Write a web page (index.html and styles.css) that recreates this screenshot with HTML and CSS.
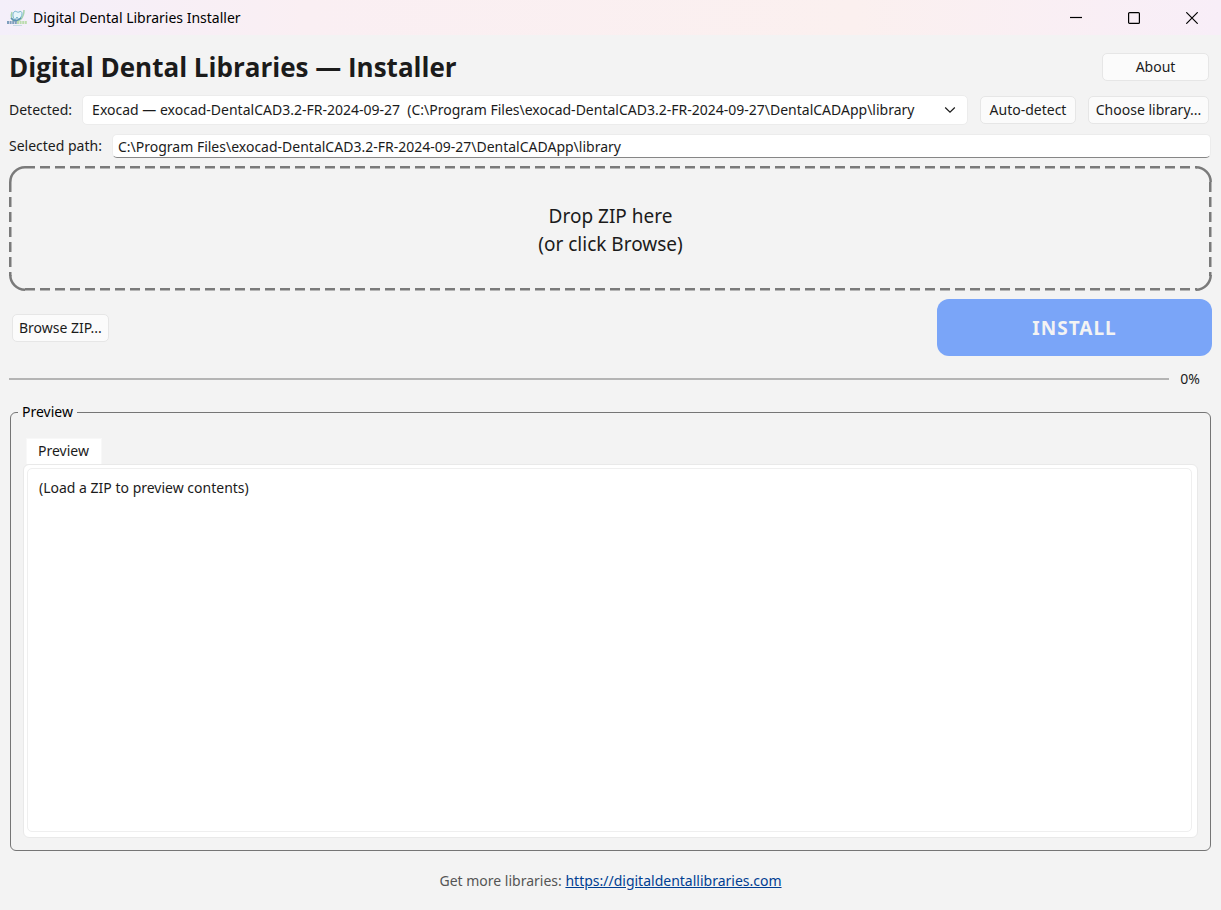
FILE: index.html
```html
<!DOCTYPE html>
<html lang="en">
<head>
  <meta charset="UTF-8" />
  <meta name="viewport" content="width=device-width, initial-scale=1" />
  <title>Digital Dental Libraries Installer</title>
  <link rel="stylesheet" href="styles.css">
</head>
<body>
  <header class="titlebar">
    <svg class="app-icon" width="20" height="18" viewBox="0 0 20 18" aria-hidden="true">
      <path d="M5 3 C3 8 5 12 8 12 C12 13 17 9 17 1" fill="none" stroke="#a5d3ae" stroke-width="1.5" />
      <path d="M7 3 C9 1 10 4 12 3 C15 1 16 5 14 8 L12 11 L10 8 L8 11 C6 9 5 5 7 3Z" fill="#e7f5fa" stroke="#6fb2cb" stroke-width="1" />
      <path d="M4 9 Q8 14 14 9" fill="none" stroke="#5b90b3" stroke-width="1.5" />
      <path d="M0 13.5H10" stroke="#7f9fbd" stroke-width="3" stroke-dasharray="2 .6" />
      <path d="M10 13.5H20" stroke="#bcdcae" stroke-width="3" stroke-dasharray="2 .6" />
      <path d="M6 16.5H15" stroke="#c9dde4" stroke-width="1" />
    </svg>
    <span class="window-title">Digital Dental Libraries Installer</span>
    <div class="window-controls">
      <button type="button" aria-label="Minimize">
        <svg width="12" height="12" viewBox="0 0 12 12"><path d="M0 5.5H12" /></svg>
      </button>
      <button type="button" aria-label="Maximize">
        <svg width="12" height="12" viewBox="0 0 12 12"><rect x=".6" y=".6" width="10.8" height="10.8" rx="1" /></svg>
      </button>
      <button type="button" aria-label="Close">
        <svg width="12" height="12" viewBox="0 0 12 12"><path d="M.3 .3L11.7 11.7M11.7 .3L.3 11.7" /></svg>
      </button>
    </div>
  </header>

  <main class="content">
    <div class="heading-row">
      <h1>Digital Dental Libraries — Installer</h1>
      <button type="button" class="btn btn-about">About</button>
    </div>

    <div class="detected-row">
      <label for="detected">Detected:</label>
      <div class="select-wrap">
        <select id="detected">
          <option>Exocad — exocad-DentalCAD3.2-FR-2024-09-27 &nbsp;(C:\Program Files\exocad-DentalCAD3.2-FR-2024-09-27\DentalCADApp\library</option>
        </select>
        <svg class="chevron" width="12" height="8" viewBox="0 0 12 8"><path d="M1.2 1.5L6 6.2L10.8 1.5" /></svg>
      </div>
      <button type="button" class="btn btn-detect">Auto-detect</button>
      <button type="button" class="btn btn-library">Choose library...</button>
    </div>

    <div class="path-row">
      <label for="path">Selected path:</label>
      <input type="text" id="path" value="C:\Program Files\exocad-DentalCAD3.2-FR-2024-09-27\DentalCADApp\library" readonly>
    </div>

    <div class="drop-zone">
      <!-- dashed sides, solid corners -->
      <svg class="drop-border" aria-hidden="true">
        <defs>
          <pattern id="dash-x" x="16" width="15" height="4000" patternUnits="userSpaceOnUse"><rect width="10" height="4000" fill="#7a7a7a" /></pattern>
          <pattern id="dash-y" y="16" width="4000" height="15" patternUnits="userSpaceOnUse"><rect width="4000" height="10" fill="#7a7a7a" /></pattern>
        </defs>
        <rect class="side-top" height="2.5" fill="url(#dash-x)" />
        <rect class="side-bottom" height="2.5" fill="url(#dash-x)" />
        <rect class="side-left" width="2.5" fill="url(#dash-y)" />
        <rect class="side-right" width="2.5" fill="url(#dash-y)" />
        <svg class="corner"><path d="M1.3 16A14.7 14.7 0 0 1 16 1.3" /></svg>
        <svg class="corner" x="100%"><path d="M-16 1.3A14.7 14.7 0 0 1 -1.3 16" /></svg>
        <svg class="corner" y="100%"><path d="M1.3 -16A14.7 14.7 0 0 0 16 -1.3" /></svg>
        <svg class="corner" x="100%" y="100%"><path d="M-16 -1.3A14.7 14.7 0 0 0 -1.3 -16" /></svg>
      </svg>
      <p>Drop ZIP here<br>(or click Browse)</p>
    </div>

    <div class="action-row">
      <button type="button" class="btn">Browse ZIP...</button>
      <button type="button" class="btn-install" disabled>INSTALL</button>
    </div>

    <div class="progress-row">
      <progress id="progress" value="0" max="100"></progress>
      <label for="progress">0%</label>
    </div>

    <fieldset class="preview-group">
      <legend>Preview</legend>
      <div class="tabs" role="tablist">
        <button type="button" class="tab" role="tab" aria-selected="true">Preview</button>
      </div>
      <div class="tab-panel" role="tabpanel">
        <div class="preview-text">(Load a ZIP to preview contents)</div>
      </div>
    </fieldset>
  </main>

  <footer class="footer">
    Get more libraries: <a href="https://digitaldentallibraries.com">https://digitaldentallibraries.com</a>
  </footer>
</body>
</html>
```
FILE: styles.css
```css
* {
  box-sizing: border-box;
}

body {
  margin: 0;
  height: 100vh;
  display: flex;
  flex-direction: column;
  background: #f3f3f3;
  color: #1b1b1b;
  font-family: "Noto Sans", "Open Sans", sans-serif;
  font-size: 14px;
  line-height: 20px;
}

button,
select,
input {
  font: inherit;
  color: inherit;
}

/* title bar */
.titlebar {
  display: flex;
  flex-shrink: 0;
  align-items: center;
  height: 35px;
  padding-left: 7px;
  background: linear-gradient(90deg, #f4effa 0%, #faeff3 25%, #fbf0ef 70%, #f8eef8 100%);
  color: #000;
}

.window-title {
  margin-left: 6px;
}

.window-controls {
  display: flex;
  margin-left: auto;
}

.window-controls button {
  display: flex;
  align-items: center;
  justify-content: center;
  width: 58px;
  height: 34px;
  padding: 0;
  border: 0;
  background: none;
}

.window-controls svg {
  fill: none;
  stroke: #000;
  stroke-width: 1.2;
}

.content {
  flex: 1;
  display: flex;
  flex-direction: column;
  padding: 0 9px;
}

.btn {
  height: 28px;
  padding: 0 6px;
  border: 1px solid #e6e6e6;
  border-radius: 5px;
  background: #fbfbfb;
  white-space: nowrap;
}

/* heading */
.heading-row {
  display: flex;
  align-items: center;
  justify-content: space-between;
  height: 58px;
  padding: 5px 3px 0 0;
}

h1 {
  margin: 0;
  font-family: "Open Sans", "Noto Sans", sans-serif;
  font-size: 26px;
  line-height: 36px;
}

.btn-about {
  width: 107px;
}

.btn-detect {
  width: 96px;
}

.btn-library {
  width: 121px;
}

/* library selection */
.detected-row {
  display: flex;
  align-items: center;
  gap: 12px;
  height: 33px;
  padding-right: 3px;
}

.select-wrap {
  position: relative;
  flex: 1;
  min-width: 0;
  margin-left: -2px;
}

select {
  display: block;
  width: 100%;
  height: 30px;
  padding: 0 28px 0 9px;
  border: 1px solid #ececec;
  border-radius: 5px;
  background: #fff;
  appearance: none;
  text-overflow: clip;
}

.chevron {
  position: absolute;
  top: 11px;
  right: 12px;
  fill: none;
  stroke: #1b1b1b;
  stroke-width: 1.2;
  pointer-events: none;
}

.path-row {
  display: flex;
  align-items: center;
  gap: 10px;
  height: 40px;
  padding-right: 1px;
}

.path-row input {
  flex: 1;
  min-width: 0;
  height: 24px;
  padding: 0 5px;
  border: 1px solid #ececec;
  border-bottom-color: #868686;
  border-radius: 5px;
  background: #fff;
}

/* drop area */
.drop-zone {
  position: relative;
  display: flex;
  flex-shrink: 0;
  align-items: center;
  justify-content: center;
  height: 125px;
  padding-top: 2px;
  text-align: center;
}

.drop-border {
  position: absolute;
  inset: 0;
  width: 100%;
  height: 100%;
}

.corner {
  overflow: visible;
  fill: none;
  stroke: #7a7a7a;
  stroke-width: 2.5;
}

.side-top,
.side-bottom {
  x: 16px;
  width: calc(100% - 31px);
}

.side-bottom {
  y: calc(100% - 3px);
}

.side-left,
.side-right {
  y: 16px;
  height: calc(100% - 31px);
}

.side-right {
  x: calc(100% - 3px);
}

.drop-zone p {
  margin: 0;
  font-size: 19px;
  line-height: 28px;
}

.action-row {
  display: flex;
  align-items: center;
  justify-content: space-between;
  padding: 8px 0 0 3px;
}

.btn-install {
  width: 275px;
  height: 57px;
  border: 0;
  border-radius: 12px;
  background: #7aa5f8;
  color: #f3f3f3;
  font-size: 19px;
  font-weight: 700;
  letter-spacing: 1px;
}

/* progress */
.progress-row {
  display: flex;
  align-items: center;
  gap: 11px;
  height: 46px;
  padding-right: 12px;
}

progress {
  flex: 1;
  height: 2px;
  border: 0;
  background: #b4b4b4;
  appearance: none;
}

progress::-webkit-progress-bar {
  background: #b4b4b4;
}

progress::-webkit-progress-value {
  background: #0067c0;
}

/* preview */
.preview-group {
  flex: 1;
  display: grid;
  grid-template-rows: 26px 1fr;
  min-width: 0;
  min-height: 160px;
  margin: 0 1px;
  padding: 16px 12px 12px;
  border: 1px solid #757575;
  border-radius: 6px;
}

legend {
  margin-left: -5px;
  padding: 0 4px;
  color: #000;
}

.tabs {
  display: flex;
  padding-left: 3px;
}

.tab {
  padding: 0 12px 2px 11px;
  border: 1px solid #f8f8f8;
  border-bottom: 0;
  background: #fff;
}

.tab-panel {
  display: flex;
  padding: 3px 5px 5px 3px;
  border: 1px solid #e9e9e9;
  border-radius: 6px;
  background: #fff;
}

.preview-text {
  flex: 1;
  padding: 9px 11px;
  border: 1px solid #efefef;
  border-radius: 5px;
}

.footer {
  padding: 20px 0 19px;
  color: #555;
  text-align: center;
}

.footer a {
  color: #003e92;
}
```
